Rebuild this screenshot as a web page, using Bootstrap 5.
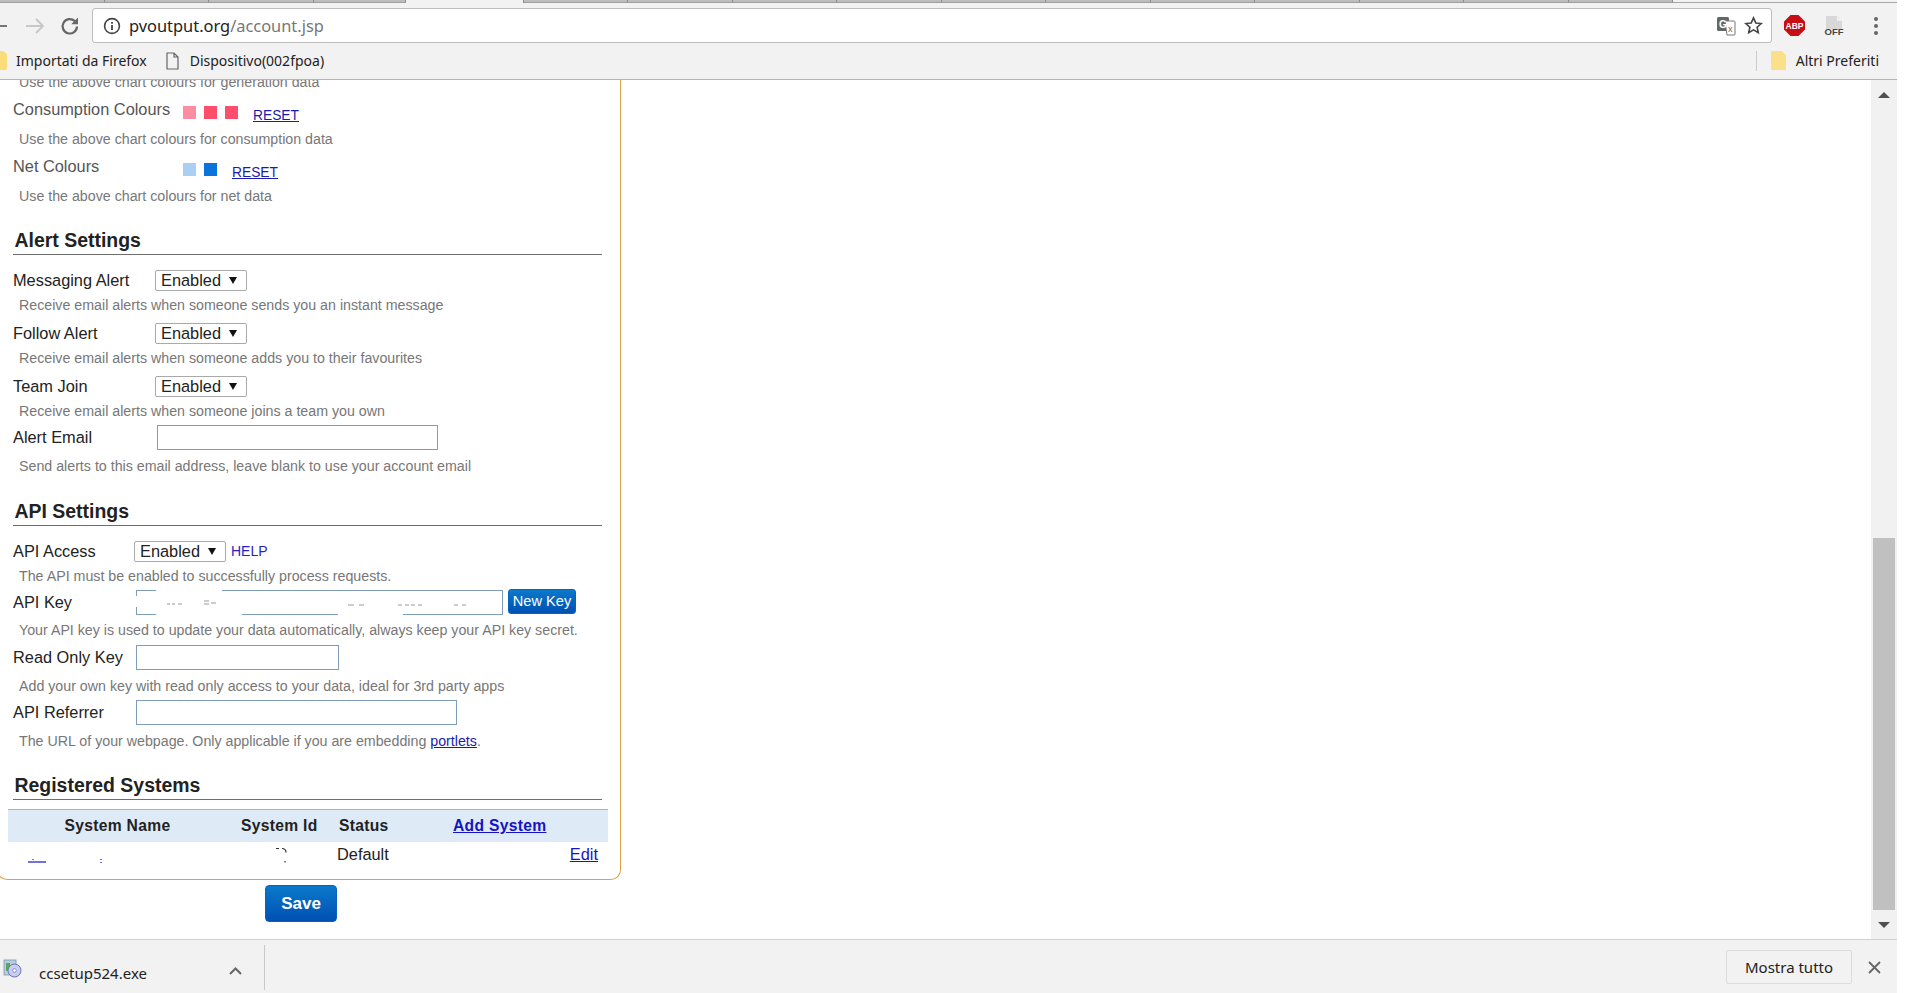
<!DOCTYPE html>
<html lang="it">
<head>
<meta charset="utf-8">
<title>pvoutput.org/account.jsp</title>
<link href="https://cdn.jsdelivr.net/npm/bootstrap@5.3.0/dist/css/bootstrap.min.css" rel="stylesheet">
<style>
html,body{height:100%;overflow:hidden;background:#fff}
body{font-family:"Liberation Sans",Arial,sans-serif;color:#333}
.shell{width:1897px;height:993px}
.chrome-top{height:80px;background:#f2f2f2;border-bottom:1px solid #b4b4b4;flex:none}
.tabstrip{height:3px;border-bottom:1px solid #a8a8a8;flex:none}
.tabpiece{height:3px;background:#bdbdbd;border-right:1px solid #8d8d8d;border-bottom:1px solid #a0a0a0}
.w104{width:104.5px}.w92{width:92px}.wactive{width:118px;background:#f2f2f2;border-bottom:0}
.toolbar{height:40px;padding-top:5px}
.addr{width:1680px;height:35px;margin-left:11px;background:#fff;border:1px solid #bdbdbd;border-radius:3px;padding:0 8px 0 10px;font:16.4px "Noto Sans",sans-serif;color:#777}
.addr b{font-weight:400;color:#222}
.bookbar{height:36px;font:14px "Noto Sans",sans-serif;color:#222;padding-bottom:1px}
.ic-back{margin-left:-13px}.ic-fwd{margin-left:15px}.ic-rel{margin-left:13px}
.ic-right{margin-left:auto}
.ext1{margin-left:12px}.ext2{margin-left:19px}.ext3{margin-left:29px}
.bm-sep{width:1px;height:20px;background:#ccc;margin-left:auto}
.bm-doc{margin-left:19px;margin-right:11px}
.bm-first{margin-left:8px}
.bm-fold{margin-left:14px;margin-right:9px}
.bm-end{margin-right:18px}
.viewport{height:859px;overflow:hidden;flex:none}
.pagearea{flex:1 1 auto;overflow:hidden}
.scroller{width:26px;flex:none;background:#f1f1f1;padding:0 2px}
.thumb{height:372px;background:#c0c0c0;margin-top:auto}
.arrow-box{height:29px}
.arrow-up{width:0;height:0;border-left:6px solid transparent;border-right:6px solid transparent;border-bottom:6px solid #505050}
.arrow-dn{width:0;height:0;border-left:6px solid transparent;border-right:6px solid transparent;border-top:6px solid #505050}
.panel{width:624px;margin:-8px 0 0 -3px;padding:0 18px 11px 15px;border:1px solid #dca24a;border-top:0;border-radius:0 0 10px 10px}
.fline{height:24px;font-size:16.35px;color:#555;display:flex;align-items:center}
.fline.dark{color:#222}
.dline{height:20px;line-height:20px;padding-left:6px;font-size:14.22px;color:#777}
.dline a{color:#1a1ab0}
.sect{height:29px;line-height:28px;margin:20px 0 0;padding-left:1.5px;font-size:19.45px;font-weight:700;color:#222;border-bottom:1px solid #6e6e6e}
.sect.sect-lower{margin-top:21px}
.s3{margin-top:3px}.s4{margin-top:4px}.s5{margin-top:5px}.s6{margin-top:6px}.s7{margin-top:7px}.s8{margin-top:8px}.s13{margin-top:13px}
.first-gap{margin-top:5px}
.lab-a{width:170px;flex:none}
.lab-b{width:142px;flex:none}
.lab-b2{width:144px;flex:none}
.lab-c{width:121px;flex:none}
.lab-d{width:123px;flex:none}
.swatches{margin-top:7px}
.swatch{width:13px;height:13px;margin-right:8px;display:block}
.sw-a{background:#fd8ea1}.sw-b{background:#fd4f6b}.sw-c{background:#a9d0f3}.sw-d{background:#0a74dc}
.rst{font-size:13.8px;color:#1a1ab0;margin:14px 0 0 7px}
.dd.form-select{width:92px;height:21px;padding:0 0 0 5px;font:16.35px/19px "Liberation Sans",sans-serif;color:#222;border:1px solid #a9a9a9;border-radius:2px;background-color:#fff;background-image:url("data:image/svg+xml,%3Csvg xmlns='http://www.w3.org/2000/svg' width='8' height='7'%3E%3Cpath d='M0 0h8L4 7z' fill='%23111'/%3E%3C/svg%3E");background-position:right 9px center;background-size:8px 7px;box-shadow:none}
.tfield.form-control{height:25px;padding:0 3px;border:1px solid #7f9db9;border-radius:0;background:#fff;box-shadow:none;min-height:0}
.w281{width:281px}.w367{width:367px}.w203{width:203px}.w321{width:321px}
.help{font-size:14px;color:#2a1fc0;text-decoration:none;margin-left:5px}
.keywrap{width:367px;height:25px;flex:none}
.overmarks{position:absolute;left:-1px;top:-1px;pointer-events:none}
.blue-btn.btn{background:linear-gradient(#0a79cb,#0050b2);border:1px solid #0a63bb;color:#fff;padding:0;line-height:1}
.newkey.btn{width:68px;height:25px;font-size:14.6px;margin:-1px 0 0 5px;border-radius:3px}
.save.btn{width:72px;height:37px;font-size:17px;font-weight:700;margin:5px 0 0 265px;border-radius:4px;display:block}
.systab.table{width:600px;margin:9px 0 0 -5px;table-layout:fixed;border-collapse:collapse;--bs-table-bg:transparent;color:#222;font-size:16.35px}
.systab.table th{height:32px;padding:0 0 0 6px;background:#dfeaf7;border:0;border-top:1px solid #9fb0ea;vertical-align:middle;font-size:15.65px;letter-spacing:.3px;color:#222}
.systab.table td{height:26px;padding:0 0 0 4px;border:0;vertical-align:middle}
.systab a{color:#1414c4}
.c1{width:227px}.c2{width:98px}.c3{width:114px}.c4{width:161px}
.systab.table th.th-first{padding-left:56.5px}
.systab.table td.edit{text-align:right;padding-right:10px}
.cell-rel{position:relative}
.frag{position:absolute;left:0;top:0}
.dlbar{height:54px;flex:none;background:#f2f2f2;border-top:1px solid #d0d0d0}
.dlname{font:15px "Noto Sans",sans-serif;color:#222;margin-left:17px;margin-top:13px}
.dl-ic{margin-left:3px;margin-top:4px}
.dl-chev{margin-left:82px;margin-top:8px}
.dl-sep{width:1px;height:45px;background:#c8c8c8;margin-left:22px;margin-top:2px}
.showall.btn{margin-left:auto;width:126px;height:34px;margin-top:1px;padding:0;background:#f2f2f2;border:1px solid #dcdcdc;border-radius:2px;font:15px "Noto Sans",sans-serif;color:#222}
.dl-x{margin-left:16px;margin-right:16px;margin-top:1px}
</style>
</head>
<body>
<div class="shell d-flex flex-column">
  <header class="chrome-top d-flex flex-column">
    <div class="tabstrip d-flex">
      <div class="tabpiece w104"></div><div class="tabpiece w104"></div><div class="tabpiece w104"></div><div class="tabpiece w92"></div>
      <div class="tabpiece wactive"></div>
      <div class="tabpiece w104"></div><div class="tabpiece w104"></div><div class="tabpiece w104"></div><div class="tabpiece w104"></div><div class="tabpiece w104"></div><div class="tabpiece w104"></div><div class="tabpiece w104"></div><div class="tabpiece w104"></div><div class="tabpiece w104"></div><div class="tabpiece w104"></div><div class="tabpiece w104"></div>
    </div>
    <div class="toolbar d-flex align-items-center">
      <svg class="ic-back" width="22" height="22" viewBox="0 0 22 22" fill="none" stroke="#777" stroke-width="2"><path d="M20 11H3M10 4l-7 7 7 7"/></svg>
      <svg class="ic-fwd" width="22" height="22" viewBox="0 0 22 22" fill="none" stroke="#c8c8c8" stroke-width="2"><path d="M2 11h17M12 4l7 7-7 7"/></svg>
      <svg class="ic-rel" width="22" height="22" viewBox="0 0 22 22" fill="none"><path d="M18 11.5a7.2 7.2 0 1 1-2.2-5.4" stroke="#666" stroke-width="2.2"/><path d="M19 2.5v6.8h-6.8z" fill="#666"/></svg>
      <div class="addr d-flex align-items-center">
        <svg class="me-2 flex-none" width="18" height="18" viewBox="0 0 18 18" fill="none"><circle cx="9" cy="9" r="7.4" stroke="#444" stroke-width="1.6"/><path d="M9 8v5M9 5v1.8" stroke="#444" stroke-width="1.8"/></svg>
        <span><b>pvoutput.org</b>/account.jsp</span>
        <svg class="ic-right" width="20" height="20" viewBox="0 0 20 20"><rect x="1" y="1" width="12" height="14" rx="1.5" fill="#666"/><path d="M9 5h9a1 1 0 0 1 1 1v12a1 1 0 0 1-1 1h-7z" fill="#fff" stroke="#777"/><text x="3" y="12" font-family="Liberation Sans" font-size="10" font-weight="700" fill="#fff">G</text><text x="12" y="16" font-family="Liberation Sans" font-size="9" fill="#666">x</text></svg>
        <svg class="ms-2" width="19" height="19" viewBox="0 0 20 20" fill="none" stroke="#444" stroke-width="1.7"><path d="M10 2l2.4 5.3 5.7.6-4.3 3.9 1.2 5.7-5-2.9-5 2.9 1.2-5.7L1.9 7.9l5.7-.6z"/></svg>
      </div>
      <svg class="ext1" width="21" height="21" viewBox="0 0 21 21"><path d="M6.5 0h8L21 6.5v8L14.500 21h-8L0 14.500v-8z" fill="#c80d14"/><text x="10.500" y="14" text-anchor="middle" font-family="Liberation Sans" font-size="8.500" font-weight="700" fill="#fff">ABP</text></svg>
      <svg class="ext2" width="20" height="22" viewBox="0 0 20 22"><path d="M2 1h11l5 5v8H2z" fill="#d8d8d8"/><path d="M13 1l5 5h-5z" fill="#f0f0f0"/><text x="10" y="20" text-anchor="middle" font-family="Liberation Sans" font-size="9.500" font-weight="700" fill="#444">OFF</text></svg>
      <svg class="ext3" width="6" height="20" viewBox="0 0 6 20" fill="#666"><circle cx="3" cy="3" r="2"/><circle cx="3" cy="10" r="2"/><circle cx="3" cy="17" r="2"/></svg>
    </div>
    <div class="bookbar d-flex align-items-center">
      <svg width="8" height="19" viewBox="0 0 8 19"><path d="M-8 0h11l4 3v14a2 2 0 0 1-2 2H-8z" fill="#fbdc7b"/></svg>
      <span class="bm-first">Importati da Firefox</span>
      <svg class="bm-doc" width="13" height="18" viewBox="0 0 13 18" fill="none" stroke="#666" stroke-width="1.200"><path d="M1 1h7l4 4v12H1zM8 1v4h4"/></svg>
      <span>Dispositivo(002fpoa)</span>
      <div class="bm-sep"></div>
      <svg class="bm-fold" width="16" height="19" viewBox="0 0 16 19"><path d="M1 0h10l4 4v14a1 1 0 0 1-1 1H1a1 1 0 0 1-1-1V1a1 1 0 0 1 1-1z" fill="#fbe08a"/></svg>
      <span class="bm-end">Altri Preferiti</span>
    </div>
  </header>

  <div class="viewport d-flex">
    <main class="pagearea">
      <form class="panel">
        <div class="dline">Use the above chart colours for generation data</div>

        <div class="fline first-gap"><span class="lab-a">Consumption Colours</span><span class="swatches d-flex"><i class="swatch sw-a"></i><i class="swatch sw-b"></i><i class="swatch sw-b"></i></span><a href="#" class="rst">RESET</a></div>
        <div class="dline s8">Use the above chart colours for consumption data</div>
        <div class="fline s5"><span class="lab-a">Net Colours</span><span class="swatches d-flex"><i class="swatch sw-c"></i><i class="swatch sw-d"></i></span><a href="#" class="rst">RESET</a></div>
        <div class="dline s8">Use the above chart colours for net data</div>

        <h2 class="sect">Alert Settings</h2>
        <div class="fline dark s13"><span class="lab-b">Messaging Alert</span><select class="dd form-select"><option>Enabled</option></select></div>
        <div class="dline s3">Receive email alerts when someone sends you an instant message</div>
        <div class="fline dark s6"><span class="lab-b">Follow Alert</span><select class="dd form-select"><option>Enabled</option></select></div>
        <div class="dline s3">Receive email alerts when someone adds you to their favourites</div>
        <div class="fline dark s6"><span class="lab-b">Team Join</span><select class="dd form-select"><option>Enabled</option></select></div>
        <div class="dline s3">Receive email alerts when someone joins a team you own</div>
        <div class="fline dark s4"><span class="lab-b2">Alert Email</span><input class="tfield form-control w281" type="text"></div>
        <div class="dline s7">Send alerts to this email address, leave blank to use your account email</div>

        <h2 class="sect sect-lower">API Settings</h2>
        <div class="fline dark s13"><span class="lab-c">API Access</span><select class="dd form-select"><option>Enabled</option></select><a href="#" class="help">HELP</a></div>
        <div class="dline s3">The API must be enabled to successfully process requests.</div>
        <div class="fline dark s4"><span class="lab-d">API Key</span>
          <div class="keywrap position-relative"><input class="tfield form-control w367" type="text">
            <svg class="overmarks" width="369" height="27" viewBox="0 0 369 27">
              <path d="M21 0h66v10H21zM21 7h86v20H21zM203 15h65v12h-65z" fill="#fff"/>
              <path d="M1 7v11" stroke="#fff" stroke-width="3"/>
              <path d="M32 15h3M37 15h3M43 15h4M69 12h5M69 15h5M76 14h5M213 16h6M224 16h5M263 16h4M270 16h4M276 16h4M283 16h4M319 16h4M327 16h4" stroke="#999" stroke-width="1"/>
            </svg>
          </div>
          <button type="button" class="blue-btn newkey btn">New Key</button></div>
        <div class="dline s6">Your API key is used to update your data automatically, always keep your API key secret.</div>
        <div class="fline dark s5"><span class="lab-d">Read Only Key</span><input class="tfield form-control w203" type="text"></div>
        <div class="dline s7">Add your own key with read only access to your data, ideal for 3rd party apps</div>
        <div class="fline dark s4"><span class="lab-d">API Referrer</span><input class="tfield form-control w321" type="text"></div>
        <div class="dline s7">The URL of your webpage. Only applicable if you are embedding <a href="#">portlets</a>.</div>

        <h2 class="sect">Registered Systems</h2>
        <table class="systab table">
          <colgroup><col class="c1"><col class="c2"><col class="c3"><col class="c4"></colgroup>
          <thead><tr><th class="th-first">System Name</th><th>System Id</th><th>Status</th><th><a href="#">Add System</a></th></tr></thead>
          <tbody><tr>
            <td class="cell-rel"><svg class="frag" width="100" height="26" viewBox="0 0 100 26"><path d="M20 20h18" stroke="#1414c4" stroke-width="1.200"/><path d="M25 17v1M93 17v1M93 20v1" stroke="#1414c4" stroke-width="1.200"/></svg></td>
            <td class="cell-rel"><svg class="frag" width="60" height="26" viewBox="0 0 60 26" fill="none"><path d="M41 6.500h3M47 6.500c3 0 4 2 4 4M50 19v1.500" stroke="#333" stroke-width="1.200"/></svg></td>
            <td>Default</td>
            <td class="edit"><a href="#">Edit</a></td>
          </tr></tbody>
        </table>
      </form>
      <button type="button" class="blue-btn save btn">Save</button>
    </main>
    <aside class="scroller d-flex flex-column">
      <div class="arrow-box d-flex justify-content-center align-items-center"><div class="arrow-up"></div></div>
      <div class="thumb"></div>
      <div class="arrow-box d-flex justify-content-center align-items-center"><div class="arrow-dn"></div></div>
    </aside>
  </div>

  <footer class="dlbar d-flex align-items-center">
    <svg class="dl-ic" width="19" height="19" viewBox="0 0 19 19"><rect x="1" y="1" width="12" height="15" fill="#b7cfe0" stroke="#7d97ad" stroke-width=".8"/><path d="M3 4h4v8H3z" fill="#5aa65a"/><circle cx="11.500" cy="11.500" r="6.500" fill="#c9cdf2" stroke="#6a74b8"/><circle cx="11.500" cy="11.500" r="1.800" fill="#fff" stroke="#6a74b8" stroke-width=".7"/></svg>
    <span class="dlname">ccsetup524.exe</span>
    <svg class="dl-chev" width="13" height="8" viewBox="0 0 13 8" fill="none" stroke="#666" stroke-width="2"><path d="M1 7l5.500-5.500L12 7"/></svg>
    <div class="dl-sep"></div>
    <button type="button" class="showall btn">Mostra tutto</button>
    <svg class="dl-x" width="13" height="13" viewBox="0 0 13 13" fill="none" stroke="#666" stroke-width="1.800"><path d="M1 1l11 11M12 1L1 12"/></svg>
  </footer>
</div>
<script src="https://cdn.jsdelivr.net/npm/bootstrap@5.3.0/dist/js/bootstrap.bundle.min.js"></script>
</body>
</html>
